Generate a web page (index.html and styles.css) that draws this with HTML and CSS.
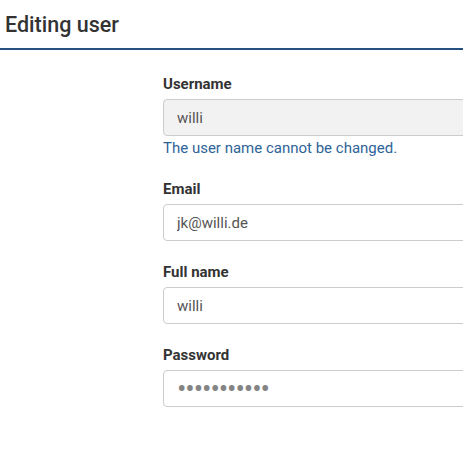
FILE: index.html
```html
<!DOCTYPE html>
<html>
<head>
<meta charset="utf-8">
<link rel="stylesheet" href="styles.css">
</head>
<body>
<header class="page-header">
  <h1 class="page-title">Editing user</h1>
</header>
<form class="user-form">
  <div class="field">
    <label class="field-label" for="username">Username</label>
    <input class="field-input is-readonly" id="username" type="text" value="willi" readonly>
    <p class="field-help">The user name cannot be changed.</p>
  </div>
  <div class="field">
    <label class="field-label" for="email">Email</label>
    <input class="field-input" id="email" type="text" value="jk@willi.de">
  </div>
  <div class="field">
    <label class="field-label" for="fullname">Full name</label>
    <input class="field-input" id="fullname" type="text" value="willi">
  </div>
  <div class="field">
    <label class="field-label" for="password">Password</label>
    <input class="field-input is-password" id="password" type="password" value="abcdefghijk">
  </div>
</form>
</body>
</html>
```
FILE: styles.css
```css
html, body {
  margin: 0;
  padding: 0;
  background: #fff;
  font-family: Roboto, "Liberation Sans", sans-serif;
  color: #333;
  overflow: hidden;
}

.page-header {
  border-bottom: 2px solid #24517f;
  height: 50px;
  box-sizing: border-box;
  padding: 12px 0 0 5px;
}

.page-title {
  margin: 0;
  font-size: 21.5px;
  line-height: 26px;
  font-weight: 500;
  color: #333;
}

.user-form {
  margin: 24px 0 0 163px;
  width: 340px;
}

.field {
  margin-bottom: 21px;
}

.field-label {
  display: block;
  font-size: 15px;
  line-height: 20px;
  font-weight: 700;
  color: #333;
  margin-bottom: 5px;
}

.field-input {
  display: block;
  box-sizing: border-box;
  width: 100%;
  height: 37px;
  margin: 0;
  padding: 0 13px;
  border: 1px solid #ccc;
  border-radius: 4px;
  font-family: Roboto, "Liberation Sans", sans-serif;
  font-size: 15px;
  color: #555;
  background: #fff;
  outline: none;
}

.field-input.is-readonly {
  background: #f2f2f2;
}

.field-input.is-password {
  color: #848484;
  font-size: 28px;
  letter-spacing: -1.1px;
}

.field-help {
  margin: 2px 0 0;
  font-size: 15px;
  line-height: 20px;
  color: #2e6398;
}
```
